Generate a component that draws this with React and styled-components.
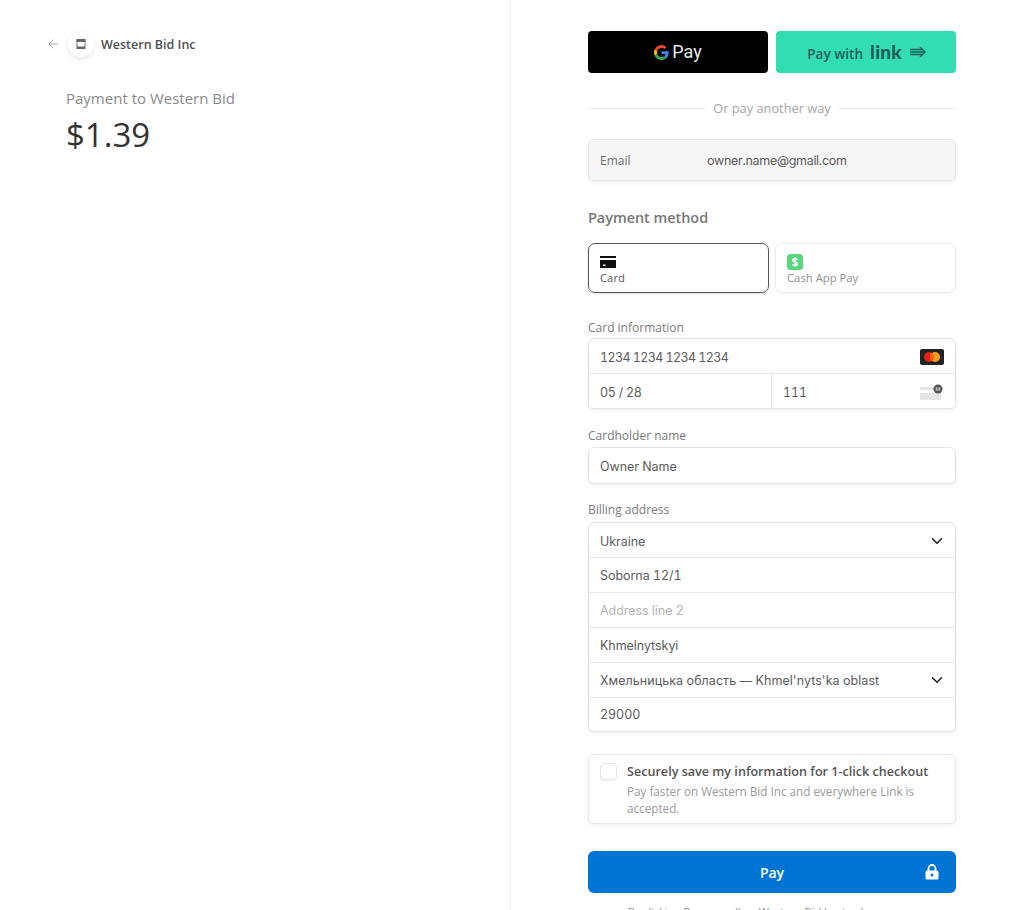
import React from "react";
import styled, { createGlobalStyle } from "styled-components";
import { ArrowLeft, ChevronDown } from "lucide-react";

const GlobalStyle = createGlobalStyle`
  html, body {
    margin: 0;
    height: 910px;
    overflow: hidden;
    background: #fff;
    font-family: "Open Sans", "Noto Sans", sans-serif;
  }
  * { box-sizing: border-box; }
`;

const Page = styled.div`
  display: flex;
  height: 910px;
  overflow: hidden;
`;

/* left column */
const Summary = styled.aside`
  width: 511px;
  height: 910px;
  flex: none;
  border-right: 1px solid #f2f2f2;
  padding: 30px 0 0 46px;
`;

const Header = styled.div`
  display: flex;
  align-items: center;
  height: 28px;
  color: #999;
`;

const Logo = styled.div`
  width: 26px;
  height: 26px;
  margin: 0 7px 0 8px;
  border-radius: 50%;
  background: #fff;
  box-shadow: 0 2px 5px rgba(0, 0, 0, 0.1);
  display: flex;
  align-items: center;
  justify-content: center;
`;

const Merchant = styled.span`
  font-size: 12.5px;
  font-weight: 600;
  color: #4f4f4f;
`;

const PayTo = styled.div`
  margin: 29px 0 0 20px;
  font-size: 15px;
  line-height: 22px;
  font-weight: 500;
  color: #8a8a8a;
`;

const Amount = styled.div`
  margin: 6px 0 0 20px;
  font-size: 33px;
  line-height: 40px;
  font-weight: 500;
  color: #333;
`;

/* right column */
const Checkout = styled.main`
  width: 368px;
  margin-left: 77px;
  padding-top: 31px;
  flex: none;
`;

const WalletRow = styled.div`
  display: grid;
  grid-template-columns: 1fr 1fr;
  gap: 8px;
`;

const WalletButton = styled.button`
  height: 42px;
  border: 0;
  border-radius: 4px;
  padding: 0;
  display: flex;
  align-items: center;
  justify-content: center;
  font-family: inherit;
  background: ${(p) => (p.$link ? "#33ddb3" : "#000")};
  color: ${(p) => (p.$link ? "#1d5e57" : "#fff")};
`;

const GPayText = styled.span`
  font-family: "Roboto", sans-serif;
  font-size: 18px;
  font-weight: 400;
  margin: -2px 0 0 3px;
  color: #e6e6e6;
`;

const LinkLabel = styled.span`
  font-size: 13.6px;
  font-weight: 600;
  margin: 2px 0 0 2px;
`;

const LinkMark = styled.span`
  font-family: "Lato", sans-serif;
  font-size: 19px;
  font-weight: 900;
  margin: -2px 7px 0 7px;
  letter-spacing: 0.2px;
`;

const Divider = styled.div`
  display: flex;
  align-items: center;
  gap: 8px;
  margin-top: 26px;
  height: 18px;
  font-size: 12.8px;
  color: #a6a6a6;
  &::before, &::after {
    content: "";
    flex: 1;
    height: 1px;
    background: #e8e8e8;
  }
`;

const EmailBox = styled.div`
  display: flex;
  align-items: center;
  height: 42px;
  margin-top: 22px;
  padding: 0 11px;
  background: #f6f6f6;
  border: 1px solid #e9e9e9;
  border-radius: 6px;
  box-shadow: 0 2px 4px rgba(0, 0, 0, 0.07);
`;

const EmailLabel = styled.span`
  width: 107px;
  font-size: 12px;
  font-weight: 500;
  color: #6d6d6d;
`;

const InputText = styled.span`
  font-family: "Inter", "Noto Sans", sans-serif;
  font-size: 12.5px;
  letter-spacing: ${(p) => p.$track ?? -0.05}px;
  font-variant-numeric: tabular-nums;
  color: ${(p) => (p.$placeholder ? "#b5b5b5" : "#5c5c5c")};
`;

const SectionTitle = styled.h2`
  margin: 26px 0 0;
  font-size: 14.4px;
  line-height: 22px;
  font-weight: 600;
  color: #777;
`;

const Tabs = styled.div`
  display: grid;
  grid-template-columns: 181px 181px;
  justify-content: space-between;
  margin-top: 14px;
`;

const Tab = styled.div`
  height: 50px;
  padding: 10px 11px 0;
  border-radius: 7px;
  border: 1px solid ${(p) => (p.$active ? "#555" : "#e9e9e9")};
  box-shadow: ${(p) => (p.$active ? "0 1px 2px rgba(0,0,0,.12)" : "0 1px 2px rgba(0,0,0,.03)")};
  color: ${(p) => (p.$active ? "#5c5c5c" : "#8f8f8f")};
`;

const TabIcon = styled.div`
  height: 16px;
  display: flex;
  align-items: center;
`;

const TabLabel = styled.div`
  font-size: 11.3px;
  line-height: 16px;
  font-weight: 500;
`;

const FieldLabel = styled.label`
  display: block;
  margin-top: ${(p) => p.$top}px;
  margin-bottom: ${(p) => p.$bottom}px;
  font-size: 12px;
  line-height: 16px;
  font-weight: 500;
  color: #7a7a7a;
`;

const FieldGroup = styled.div`
  border: 1px solid #e3e3e3;
  border-radius: 6px;
  overflow: hidden;
  background: #fff;
  box-shadow: 0 2px 4px rgba(0, 0, 0, 0.06);
`;

const Row = styled.div`
  display: flex;
  align-items: center;
  justify-content: space-between;
  height: ${(p) => p.$h || 35}px;
  padding: ${(p) => (p.$nudge ? 2 : 0)}px 11px 0;
  & + & { border-top: 1px solid #e6e6e6; }
`;

const SplitRow = styled.div`
  display: grid;
  grid-template-columns: 182px 1fr;
  height: 35px;
  border-top: 1px solid #e6e6e6;
`;

const SplitCell = styled.div`
  display: flex;
  align-items: center;
  justify-content: space-between;
  padding: 2px 11px 0;
  & + & { border-left: 1px solid #e6e6e6; }
`;

const SelectArrow = styled(ChevronDown)`
  margin-right: -2px;
`;

const SaveBox = styled.div`
  display: flex;
  gap: 10px;
  height: 70px;
  margin-top: 22px;
  padding: 8px 11px 0;
  border: 1px solid #e6e6e6;
  border-radius: 6px;
  box-shadow: 0 2px 4px rgba(0, 0, 0, 0.06);
`;

const CheckBox = styled.span`
  width: 17px;
  height: 17px;
  flex: none;
  border: 1px solid #e3e3e3;
  border-radius: 4px;
  box-shadow: 0 1px 2px rgba(0, 0, 0, 0.06);
`;

const SaveTitle = styled.div`
  font-size: 12.6px;
  line-height: 18px;
  font-weight: 600;
  color: #555;
  white-space: nowrap;
`;

const SaveText = styled.div`
  margin-top: 2px;
  font-size: 11.7px;
  line-height: 17px;
  color: #9a9a9a;
`;

const PayButton = styled.button`
  position: relative;
  display: block;
  width: 100%;
  height: 42px;
  margin-top: 27px;
  border: 0;
  border-radius: 6px;
  background: #0074d4;
  color: #fff;
  font-family: inherit;
  font-size: 14px;
  font-weight: 600;
`;

const LockIcon = styled.svg`
  position: absolute;
  right: 17px;
  top: 13px;
`;

const Terms = styled.p`
  margin: 11px 0 0;
  padding: 0 30px;
  font-size: 11px;
  line-height: 16px;
  text-align: center;
  color: #8f8f8f;
`;

function StoreIcon() {
  return (
    <svg width="12" height="12" viewBox="0 0 12 12">
      <path d="M1.500 1h9l.5 3H1z" fill="#666" />
      <path d="M1.500 4.500h1V8.500h7V4.500h1V11h-9z" fill="#666" />
    </svg>
  );
}

function GoogleG() {
  return (
    <svg width="15" height="15" viewBox="0 0 48 48">
      <path fill="#EA4335" d="M24 9.500c3.500 0 6.700 1.200 9.200 3.600l6.900-6.900C35.900 2.400 30.500 0 24 0 14.600 0 6.500 5.400 2.600 13.200l8 6.200C12.400 13.700 17.700 9.500 24 9.500z" />
      <path fill="#4285F4" d="M46.900 24.500c0-1.600-.1-3.100-.4-4.500H24v9h12.900c-.6 3-2.200 5.500-4.700 7.200l7.700 6c4.500-4.200 7-10.300 7-17.700z" />
      <path fill="#FBBC05" d="M10.500 28.600c-.5-1.400-.8-3-.8-4.600s.3-3.200.8-4.600l-8-6.200C.9 16.500 0 20.100 0 24s.9 7.500 2.600 10.800l7.900-6.200z" />
      <path fill="#34A853" d="M24 48c6.500 0 11.900-2.100 15.900-5.800l-7.700-6c-2.200 1.500-5 2.300-8.200 2.300-6.300 0-11.600-4.200-13.500-9.900l-8 6.200C6.500 42.600 14.600 48 24 48z" />
    </svg>
  );
}

function DoubleArrow() {
  return (
    <svg width="18" height="12" viewBox="0 0 18 12" fill="none" stroke="#1d5e57" strokeWidth="1.4">
      <path d="M1 3.500h12M1 6h14M1 8.500h12" />
      <path d="M11 1l5 5-5 5" />
    </svg>
  );
}

function CardIcon() {
  return (
    <svg width="16" height="12" viewBox="0 0 16 12">
      <path d="M0 0h16v2H0z" fill="#111" />
      <path d="M0 4h16v8H0z" fill="#111" />
      <path d="M3 8.500h2.500v1.500H3z" fill="#fff" />
    </svg>
  );
}

function CashAppIcon() {
  return (
    <svg width="16" height="16" viewBox="0 0 16 16">
      <rect width="16" height="16" rx="3.500" fill="#57d67d" />
      <path d="M10.500 5.800C10 5 9 4.700 8 4.700c-1.300 0-2.300.6-2.300 1.700C5.700 8.800 10.500 7.300 10.500 9.800c0 1-1 1.700-2.500 1.700-1.100 0-2.100-.4-2.700-1.200M8 3.200v9.600" fill="none" stroke="#fff" strokeWidth="1.400" />
    </svg>
  );
}

function MastercardIcon() {
  return (
    <svg width="24" height="16" viewBox="0 0 24 16">
      <rect width="24" height="16" rx="2" fill="#222" />
      <circle cx="9" cy="8" r="5" fill="#e2231a" />
      <circle cx="15" cy="8" r="5" fill="#f79e1b" />
      <path d="M12 4a5 5 0 0 1 0 8 5 5 0 0 1 0-8z" fill="#ff5f00" />
    </svg>
  );
}

function CvcIcon() {
  return (
    <svg width="24" height="17" viewBox="0 0 24 17">
      <rect x="0" y="3" width="21" height="13" rx="1" fill="#e4e4e4" />
      <rect x="0" y="6" width="21" height="3" fill="#fff" />
      <circle cx="18" cy="5" r="4.500" fill="#555" />
      <path d="M16.300 3.200v3.600M18 3.200v3.600M19.700 3.200v3.600" stroke="#eee" strokeWidth="0.800" />
    </svg>
  );
}

function App() {
  return (
    <Page>
      <GlobalStyle />
      <Summary>
        <Header>
          <ArrowLeft size={14} strokeWidth={1.5} />
          <Logo>
            <StoreIcon />
          </Logo>
          <Merchant>Western Bid Inc</Merchant>
        </Header>
        <PayTo>Payment to Western Bid</PayTo>
        <Amount>$1.39</Amount>
      </Summary>

      <Checkout>
        <WalletRow>
          <WalletButton>
            <GoogleG />
            <GPayText>Pay</GPayText>
          </WalletButton>
          <WalletButton $link>
            <LinkLabel>Pay with</LinkLabel>
            <LinkMark>link</LinkMark>
            <DoubleArrow />
          </WalletButton>
        </WalletRow>

        <Divider>Or pay another way</Divider>

        <EmailBox>
          <EmailLabel>Email</EmailLabel>
          <InputText $track={-0.3}>owner.name@gmail.com</InputText>
        </EmailBox>

        <SectionTitle>Payment method</SectionTitle>
        <Tabs>
          <Tab $active>
            <TabIcon>
              <CardIcon />
            </TabIcon>
            <TabLabel>Card</TabLabel>
          </Tab>
          <Tab>
            <TabIcon>
              <CashAppIcon />
            </TabIcon>
            <TabLabel>Cash App Pay</TabLabel>
          </Tab>
        </Tabs>

        <FieldLabel $top={27} $bottom={2}>Card information</FieldLabel>
        <FieldGroup>
          <Row $h={34} $nudge>
            <InputText $track={-0.6}>1234 1234 1234 1234</InputText>
            <MastercardIcon />
          </Row>
          <SplitRow>
            <SplitCell>
              <InputText $track={-0.3}>05 / 28</InputText>
            </SplitCell>
            <SplitCell>
              <InputText>111</InputText>
              <CvcIcon />
            </SplitCell>
          </SplitRow>
        </FieldGroup>

        <FieldLabel $top={19} $bottom={3}>Cardholder name</FieldLabel>
        <FieldGroup>
          <Row $nudge>
            <InputText>Owner Name</InputText>
          </Row>
        </FieldGroup>

        <FieldLabel $top={18} $bottom={4}>Billing address</FieldLabel>
        <FieldGroup>
          <Row $h={34} $nudge>
            <InputText>Ukraine</InputText>
            <SelectArrow size={18} color="#222" strokeWidth={2} />
          </Row>
          <Row>
            <InputText>Soborna 12/1</InputText>
          </Row>
          <Row>
            <InputText $placeholder>Address line 2</InputText>
          </Row>
          <Row>
            <InputText>Khmelnytskyi</InputText>
          </Row>
          <Row>
            <InputText $track={0.05}>Хмельницька область — Khmel'nyts'ka oblast</InputText>
            <SelectArrow size={18} color="#222" strokeWidth={2} />
          </Row>
          <Row $h={34}>
            <InputText>29000</InputText>
          </Row>
        </FieldGroup>

        <SaveBox>
          <CheckBox />
          <div>
            <SaveTitle>Securely save my information for 1-click checkout</SaveTitle>
            <SaveText>Pay faster on Western Bid Inc and everywhere Link is accepted.</SaveText>
          </div>
        </SaveBox>

        <PayButton>
          Pay
          <LockIcon width="14" height="16" viewBox="0 0 14 16">
            <path d="M3.500 7V4.500a3.500 3.500 0 0 1 7 0V7" fill="none" stroke="#fff" strokeWidth="1.800" />
            <rect x="0.500" y="6.500" width="13" height="9" rx="1.500" fill="#fff" />
            <circle cx="7" cy="11" r="1.500" fill="#0074d4" />
          </LockIcon>
        </PayButton>

        <Terms>By clicking Pay, you allow Western Bid Inc to charge your card.</Terms>
      </Checkout>
    </Page>
  );
}

export default App;
